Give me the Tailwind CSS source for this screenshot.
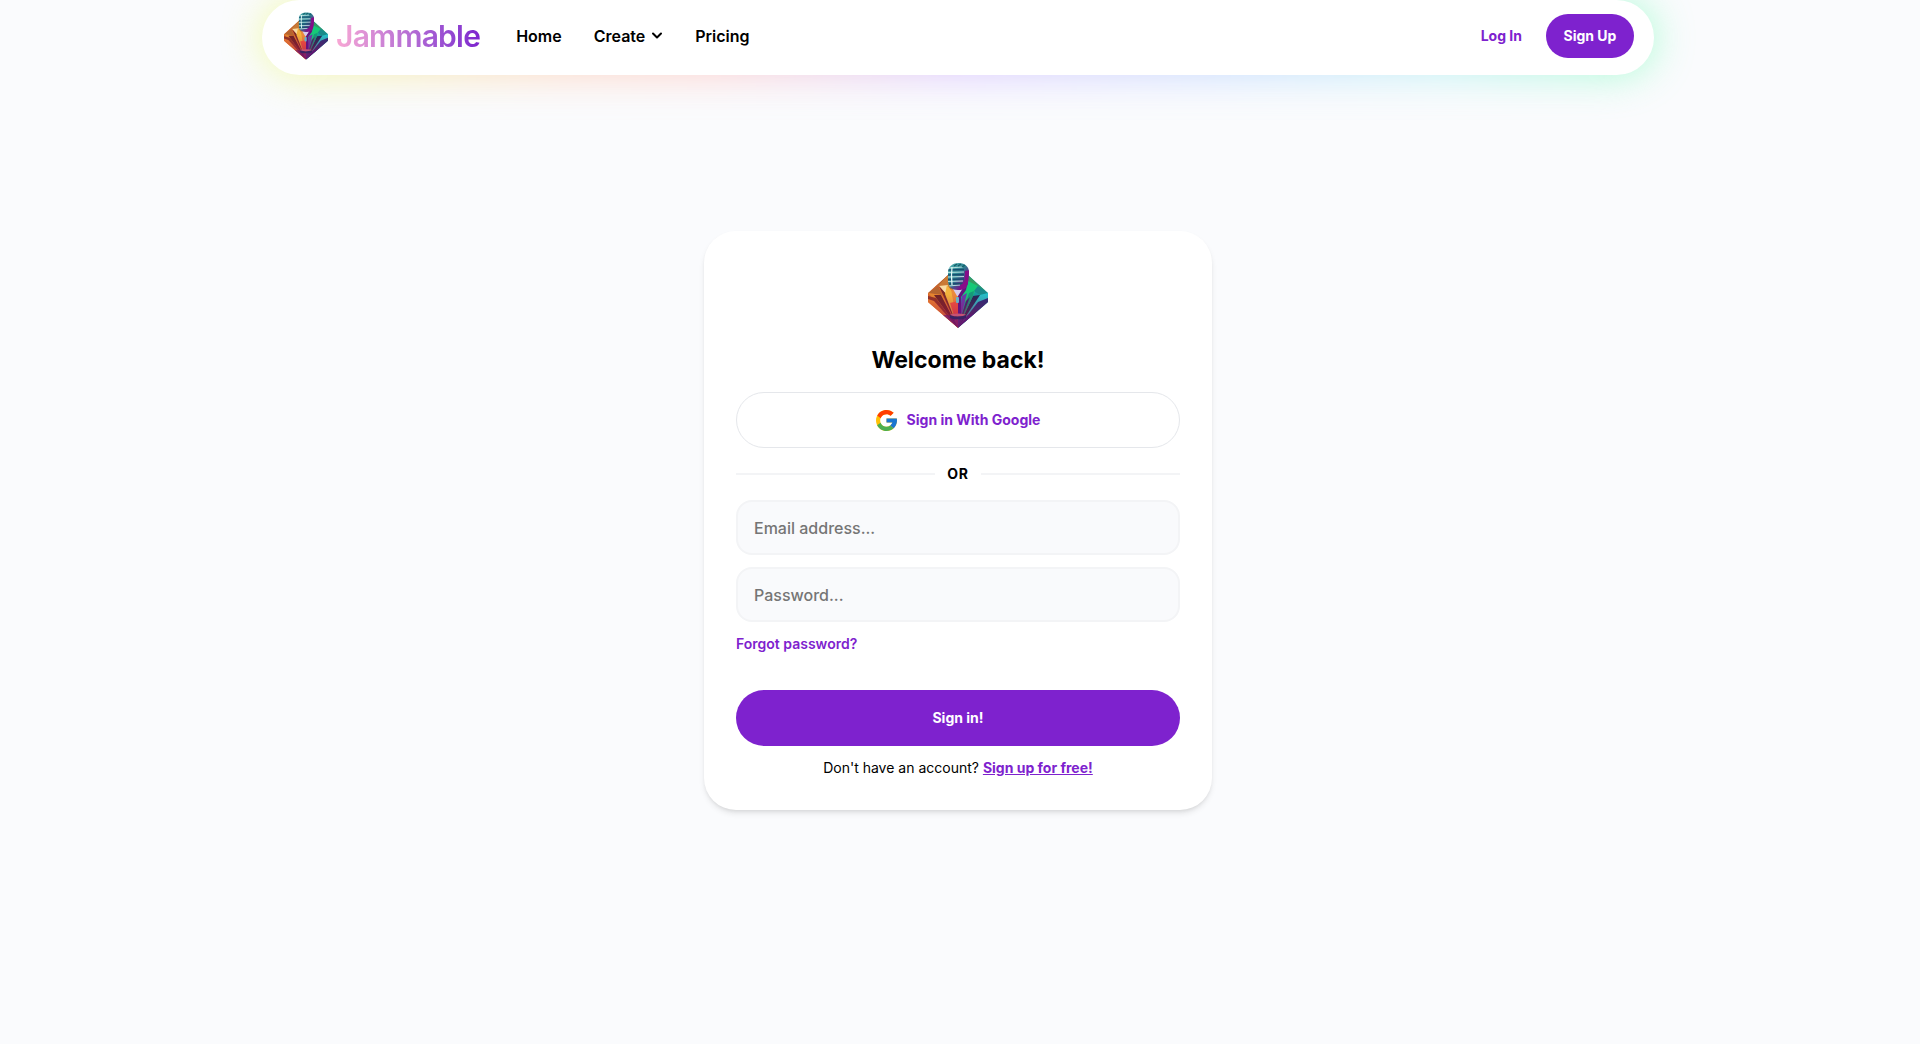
<!DOCTYPE html>
<html lang="en">
<head>
    <meta charset="UTF-8">
    <meta name="viewport" content="width=device-width, initial-scale=1.0">
    <title>Jammable - Sign In</title>
    <script src="https://cdn.jsdelivr.net/npm/@tailwindcss/browser@4"></script>
</head>
<body class="min-h-screen flex flex-col pr-1 bg-[#fafbfd] text-black font-['Inter',sans-serif]">

    <!-- Shared logo artwork -->
    <svg class="absolute w-0 h-0" aria-hidden="true">
        <defs>
            <linearGradient id="mic-head" x1="0" y1="0" x2="1" y2="1">
                <stop offset="0" stop-color="#56b8b5"></stop>
                <stop offset=".45" stop-color="#2b7f8f"></stop>
                <stop offset=".7" stop-color="#6b2289"></stop>
                <stop offset="1" stop-color="#a5128f"></stop>
            </linearGradient>
            <linearGradient id="gem-fade" x1="0" y1="0" x2="0" y2="1">
                <stop offset=".45" stop-color="#b0124f" stop-opacity="0"></stop>
                <stop offset="1" stop-color="#8c0f52"></stop>
            </linearGradient>
            <clipPath id="gem-clip">
                <path d="M30 3L60 30V39L30 65L0 39V30Z"></path>
            </clipPath>
            <clipPath id="head-clip">
                <path d="M20 10C20 3 25 0 31 0C37 0 41 4 41 9L40 20C39 25 35 27 30 27C24 27 20 24 20 18Z"></path>
            </clipPath>
        </defs>
        <symbol id="logo" viewBox="0 0 60 65">
            <g clip-path="url(#gem-clip)">
                <rect width="30" height="65" fill="#d9622b"></rect>
                <rect x="30" width="30" height="65" fill="#179aa0"></rect>
                <path d="M30 3L0 30L10 22L30 30Z" fill="#b5652f"></path>
                <path d="M20 12L10 23L22 24L30 10Z" fill="#c97a35"></path>
                <path d="M0 30L10 23L14 32Z" fill="#b5652f"></path>
                <path d="M0 30L14 32L30 65Z" fill="#e5872f"></path>
                <path d="M0 33L8 35L30 65L0 37Z" fill="#8f3424"></path>
                <path d="M0 36L6 38L30 65L0 42Z" fill="#e9812e"></path>
                <path d="M6 32L13 32L30 65Z" fill="#6f2424"></path>
                <path d="M11 23L20 22L18 31Z" fill="#f8dba2"></path>
                <path d="M11 23L19 32L25 52L30 65Z" fill="#7b2a27"></path>
                <path d="M19 22L24 28L30 65L17 31Z" fill="#f2b33c"></path>
                <path d="M23 26L30 28V65Z" fill="#ea8a3b"></path>
                <path d="M22 40L30 38V65Z" fill="#f4553d"></path>
                <path d="M30 3L60 30L50 23L32 30Z" fill="#379b63"></path>
                <path d="M40 18L50 23L40 42L33 34Z" fill="#16c978"></path>
                <path d="M50 23L60 30L52 32L46 28Z" fill="#1a8a8a"></path>
                <path d="M52 32L60 30V36L30 65Z" fill="#25bfc7"></path>
                <path d="M60 35V41L30 65L50 39Z" fill="#252e78"></path>
                <path d="M45 33L52 32L30 65Z" fill="#202b58"></path>
                <path d="M41 30L46 28L45 33L30 65Z" fill="#159a79"></path>
                <path d="M34 33L39 30L30 65Z" fill="#6838ae"></path>
                <path d="M38 38L42 34L30 65Z" fill="#3b2572"></path>
                <path d="M30 3L60 30V39L30 65L0 39V30Z" fill="url(#gem-fade)" opacity=".7"></path>
                <path d="M20 52L30 57L40 52L48 50L30 65L14 52Z" fill="#641078" opacity=".6"></path>
            </g>
            <!-- Stand -->
            <path d="M25 26L35 26L31 33H29Z" fill="#d6cbea"></path>
            <path d="M40 18L38 27L33 34V52H30V33L35 25Z" fill="#65137e"></path>
            <rect x="28" y="34" width="3" height="6" rx="1" fill="#65b3c8"></rect>
            <ellipse cx="30" cy="52" rx="8" ry="1.500" fill="#c35375"></ellipse>
            <path d="M22 52Q30 55 38 52V55Q30 58 22 55Z" fill="#392263"></path>
            <!-- Microphone head -->
            <g clip-path="url(#head-clip)">
                <rect x="19" y="0" width="23" height="28" fill="url(#mic-head)"></rect>
                <path d="M20 5L35 4M20 9.500L36 9M20 14L36 13.500M20 18.500L35 18M20 23L32 22" stroke="#b4dedd" stroke-width="1.200" fill="none"></path>
                <path d="M20 7L36 6.500M20 12L36 11.500M20 16.500L36 16M21 21L35 20.500" stroke="#174f70" stroke-width="1.500" fill="none"></path>
                <path d="M24 4Q23 12 24 22" stroke="#e6fbf8" stroke-width="1.200" fill="none"></path>
                <path d="M37 8L42 7L40 25L30 28L33 22L37 18Z" fill="#870d88"></path>
                <path d="M26 3L29 1M30 3L33 1M34 4L37 2" stroke="#155d69" stroke-width="1.400"></path>
            </g>
        </symbol>
    </svg>

    <header class="relative w-full max-w-[1392px] mx-auto">
        <div class="absolute inset-0 rounded-full blur-[20px] opacity-60 bg-[linear-gradient(90deg,#e9ff70,#ffbe9f_22%,#ffb4ae_32%,#c9a7ff_50%,#a3c9ff_70%,#9eeaf0_84%,#70ffb0)]"></div>
        <nav class="relative h-[75px] pl-[22px] pr-5 pb-[3px] flex items-center justify-between rounded-full bg-white">
            <div class="flex items-center">
                <a href="#" class="flex items-center gap-2">
                    <svg class="w-11 h-12" aria-hidden="true"><use href="#logo"></use></svg>
                    <span class="text-[30px] leading-9 font-semibold tracking-tight bg-linear-to-r from-[#f9a8d4] to-[#7e22ce] bg-clip-text text-transparent">Jammable</span>
                </a>
                <div class="ml-9 flex items-center gap-8 text-base font-semibold">
                    <a href="#">Home</a>
                    <button type="button" class="flex items-center gap-1.5">
                        Create
                        <svg class="w-3 h-3" viewBox="0 0 12 12" fill="none" stroke="currentColor" stroke-width="2" stroke-linecap="round" stroke-linejoin="round"><path d="M2 3.500L6 7.500L10 3.500"></path></svg>
                    </button>
                    <a href="#">Pricing</a>
                </div>
            </div>
            <div class="flex items-center gap-6 text-sm font-bold">
                <a href="#" class="text-[#7e22ce]">Log In</a>
                <button type="button" class="w-22 h-11 rounded-full bg-[#7e22ce] text-white">Sign Up</button>
            </div>
        </nav>
    </header>

    <main class="grow flex items-center justify-center pb-[78px]">
        <div class="w-full max-w-[508px] p-8 flex flex-col rounded-[32px] bg-white shadow-md">
            <svg class="w-[60px] h-[65px] mx-auto" aria-hidden="true"><use href="#logo"></use></svg>
            <h1 class="mt-4 text-[23px] leading-8 font-bold text-center">Welcome back!</h1>

            <button type="button" class="mt-4 h-14 flex items-center justify-center gap-2.5 rounded-full border border-gray-200 text-sm font-bold text-[#7e22ce]">
                <svg class="w-[21px] h-[21px]" viewBox="4 4 40 40" aria-hidden="true">
                    <path fill="#FFC107" d="M43.611 20.083H42V20H24v8h11.303c-1.649 4.657-6.080 8-11.303 8c-6.627 0-12-5.373-12-12s5.373-12 12-12c3.059 0 5.842 1.154 7.961 3.039l5.657-5.657C34.046 6.053 29.268 4 24 4C12.955 4 4 12.955 4 24s8.955 20 20 20s20-8.955 20-20c0-1.341-.138-2.650-.389-3.917z"></path>
                    <path fill="#FF3D00" d="M6.306 14.691l6.571 4.819C14.655 15.108 18.961 12 24 12c3.059 0 5.842 1.154 7.961 3.039l5.657-5.657C34.046 6.053 29.268 4 24 4C16.318 4 9.656 8.337 6.306 14.691z"></path>
                    <path fill="#4CAF50" d="M24 44c5.166 0 9.860-1.977 13.409-5.192l-6.190-5.238A11.910 11.910 0 0 1 24 36c-5.202 0-9.619-3.317-11.283-7.946l-6.522 5.025C9.505 39.556 16.227 44 24 44z"></path>
                    <path fill="#1976D2" d="M43.611 20.083H42V20H24v8h11.303a12.040 12.040 0 0 1-4.087 5.571l6.190 5.238C36.971 39.205 44 34 44 24c0-1.341-.138-2.650-.389-3.917z"></path>
                </svg>
                Sign in With Google
            </button>

            <div class="my-4 flex items-center gap-3 text-sm font-bold tracking-wider">
                <div class="grow h-0.5 bg-gray-100"></div>
                OR
                <div class="grow h-0.5 bg-gray-100"></div>
            </div>

            <form class="flex flex-col">
                <input type="email" aria-label="Email address" placeholder="Email address..." class="h-[55px] px-4 rounded-2xl border-2 border-gray-100 bg-[#f9fafc] text-base font-medium placeholder:text-[#757575]">
                <input type="password" aria-label="Password" placeholder="Password..." class="mt-3 h-[55px] px-4 rounded-2xl border-2 border-gray-100 bg-[#f9fafc] text-base font-medium placeholder:text-[#757575]">
                <a href="#" class="mt-3 self-start text-sm font-semibold text-[#7e22ce]">Forgot password?</a>
                <button type="submit" class="mt-9 h-14 rounded-full bg-[#7e22ce] text-sm font-bold text-white">Sign in!</button>
            </form>

            <p class="mt-3 text-sm text-center">Don't have an account? <a href="#" class="font-bold text-[#7e22ce] underline">Sign up for free!</a></p>
        </div>
    </main>

</body>
</html>
